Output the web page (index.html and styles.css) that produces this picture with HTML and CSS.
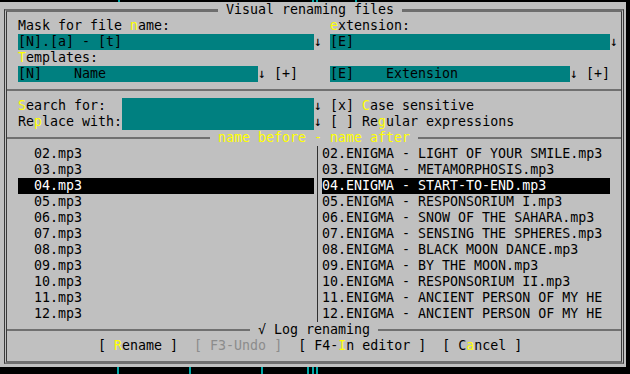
FILE: index.html
```html
<!DOCTYPE html>
<html lang="en">

<head>
    <meta charset="UTF-8">
    <meta name="viewport" content="width=device-width, initial-scale=1.0">
    <title>Visual renaming files</title>
    <link rel="stylesheet" href="styles.css">
</head>

<body>
    <!-- leftovers of the panels behind the dialog -->
    <span class="tick t1"></span>
    <span class="tick t2"></span>
    <span class="tick t3"></span>
    <span class="tick t4"></span>
    <span class="tick b1"></span>
    <span class="tick b2"></span>
    <span class="tick b3"></span>
    <span class="tick b4"></span>
    <span class="tick b5"></span>
    <span class="tick b6"></span>

    <div class="dialog">
        <div class="frame">
            <div class="title"> Visual renaming files </div>

            <div class="row halves">
                <div>Mask for file <span class="hk">n</span>ame:</div>
                <div><span class="hk">e</span>xtension:</div>
            </div>
            <div class="row halves">
                <div><span class="field w37">[N].[a] - [t]</span>↓</div>
                <div><span class="field w35">[E]</span>↓</div>
            </div>
            <div class="row halves">
                <div><span class="hk">T</span>emplates:</div>
                <div></div>
            </div>
            <div class="row halves">
                <div><span class="field w30">[N]    Name</span>↓ [+]</div>
                <div><span class="field w30">[E]    Extension</span>↓ [+]</div>
            </div>

            <div class="sep"></div>

            <div class="row halves">
                <div><span class="label"><span class="hk">S</span>earch for:</span><span class="field w24"></span>↓</div>
                <div>[x] <span class="hk">C</span>ase sensitive</div>
            </div>
            <div class="row halves">
                <div><span class="label">Re<span class="hk">p</span>lace with:</span><span class="field w24"></span>↓</div>
                <div>[ ] Re<span class="hk">g</span>ular expressions</div>
            </div>

            <div class="sep"><span class="sep-text"> name before - name after </span></div>

            <div class="lists">
                <div class="list">
                    <div class="item">  02.mp3</div>
                    <div class="item">  03.mp3</div>
                    <div class="item sel">  04.mp3</div>
                    <div class="item">  05.mp3</div>
                    <div class="item">  06.mp3</div>
                    <div class="item">  07.mp3</div>
                    <div class="item">  08.mp3</div>
                    <div class="item">  09.mp3</div>
                    <div class="item">  10.mp3</div>
                    <div class="item">  11.mp3</div>
                    <div class="item">  12.mp3</div>
                </div>
                <div class="divider"></div>
                <div class="list">
                    <div class="item">02.ENIGMA - LIGHT OF YOUR SMILE.mp3</div>
                    <div class="item">03.ENIGMA - METAMORPHOSIS.mp3</div>
                    <div class="item sel">04.ENIGMA - START-TO-END.mp3</div>
                    <div class="item">05.ENIGMA - RESPONSORIUM I.mp3</div>
                    <div class="item">06.ENIGMA - SNOW OF THE SAHARA.mp3</div>
                    <div class="item">07.ENIGMA - SENSING THE SPHERES.mp3</div>
                    <div class="item">08.ENIGMA - BLACK MOON DANCE.mp3</div>
                    <div class="item">09.ENIGMA - BY THE MOON.mp3</div>
                    <div class="item">10.ENIGMA - RESPONSORIUM II.mp3</div>
                    <div class="item">11.ENIGMA - ANCIENT PERSON OF MY HE</div>
                    <div class="item">12.ENIGMA - ANCIENT PERSON OF MY HE</div>
                </div>
            </div>

            <div class="sep"><span class="sep-text log"> √ Log renaming </span></div>

            <div class="row buttons">
                <span>[ <span class="hk">R</span>ename ]</span>
                <span class="disabled">[ F3-Undo ]</span>
                <span>[ F4-<span class="hk">I</span>n editor ]</span>
                <span>[ C<span class="hk">a</span>ncel ]</span>
            </div>
        </div>
    </div>
</body>

</html>
```

FILE: styles.css
```css
* {
    box-sizing: border-box;
}

body {
    margin: 0;
    height: 374px;
    overflow: hidden;
    position: relative;
    background: #000;
    color: #000;
    font-family: "DejaVu Sans Mono", monospace;
    font-size: 13.3px;
    line-height: 16px;
}

.tick {
    position: absolute;
    width: 2px;
    background: #00a8a8;
}

.t1, .t2, .t3, .t4 {
    top: 0;
    height: 2px;
}
.t1 { left: 118px; }
.t2 { left: 312px; }
.t3 { left: 316px; }
.t4 { left: 355px; }

.b1, .b2, .b3, .b4, .b5, .b6 {
    top: 367px;
    height: 7px;
}
.b1 { left: 117px; }
.b2 { left: 189px; }
.b3 { left: 261px; }
.b4 { left: 307px; }
.b5 { left: 312px; }
.b6 { left: 316px; }

.dialog {
    width: 626px;
    height: 365px;
    margin-top: 2px;
    padding: 7px 2px 0 4px;
    background: #c0c0c0;
}

.frame {
    position: relative;
    width: 620px;
    height: 355px;
    padding-top: 6px;
    border-top: 3px solid #6e6e6e;
    border-bottom: 3px solid #6e6e6e;
    border-left: 3px double #3a3a3a;
    border-right: 3px double #3a3a3a;
}

.title {
    position: absolute;
    top: -10px;
    left: 211px;
    height: 16px;
    background: #c0c0c0;
    white-space: pre;
}

.row {
    height: 16px;
    padding-left: 11px;
    white-space: pre;
}

.halves {
    display: grid;
    grid-template-columns: 312px 1fr;
}

.hk {
    color: #ffff00;
}

.field {
    display: inline-block;
    height: 16px;
    vertical-align: top;
    background: #008080;
}

.w37 { width: 296px; }
.w35 { width: 280px; }
.w30 { width: 240px; }
.w24 { width: 192px; }

.label {
    display: inline-block;
    width: 104px;
}

.sep {
    display: flex;
    align-items: center;
    height: 16px;
}

.sep::before,
.sep::after {
    content: "";
    flex: 1;
    height: 2px;
    background: #707070;
}

.sep-text {
    color: #ffff00;
    white-space: pre;
}

.sep-text.log {
    color: #000;
}

.lists {
    display: grid;
    grid-template-columns: 296px 8px 288px;
    padding-left: 11px;
}

.item {
    height: 16px;
    white-space: pre;
    overflow: hidden;
}

.sel {
    background: #000;
    color: #fff;
}

.divider {
    width: 1px;
    margin-left: 3px;
    background: #303030;
}

.buttons {
    display: flex;
    gap: 16px;
    padding-left: 91px;
}

.disabled {
    color: #8c8c8c;
}
```
